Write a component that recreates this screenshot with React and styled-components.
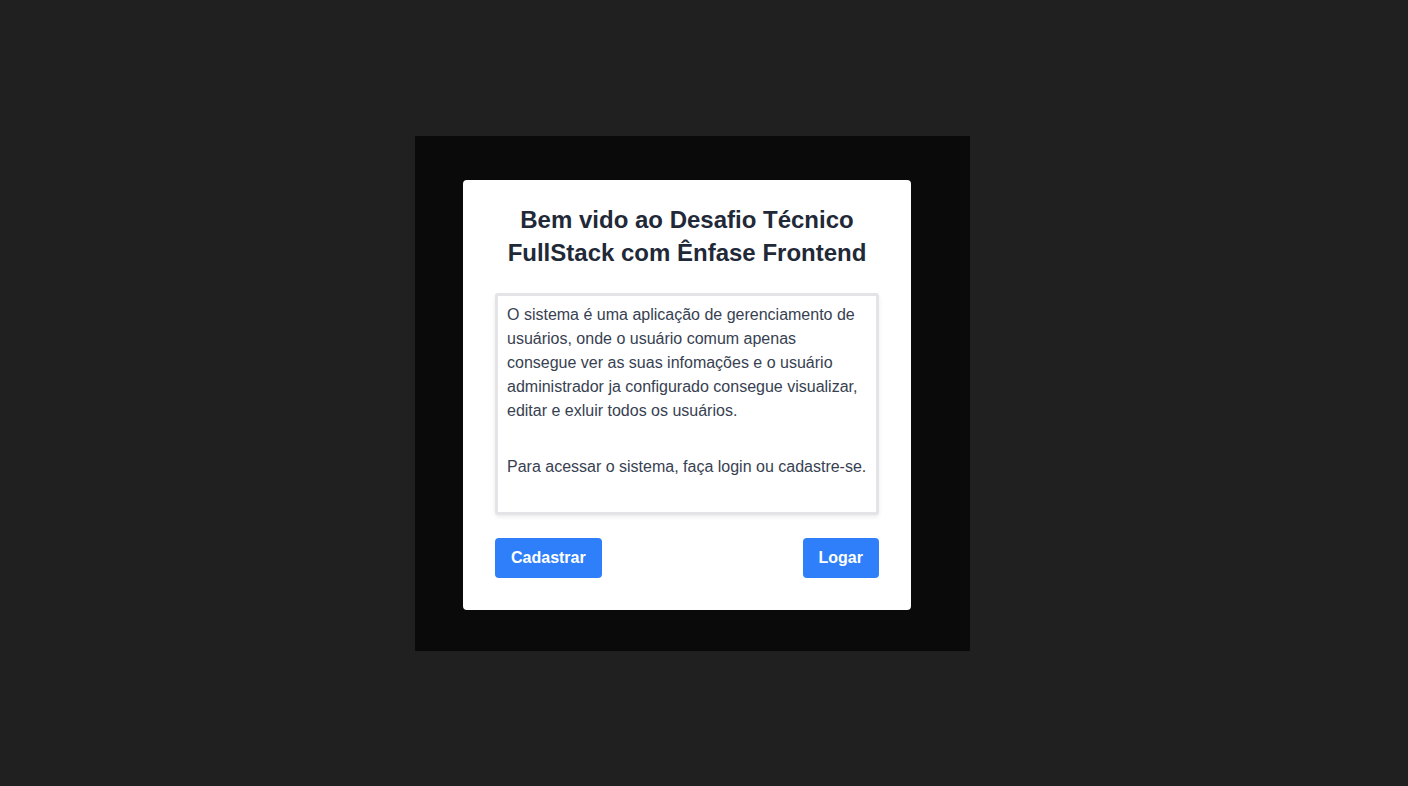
import React from 'react';
import styled, { createGlobalStyle } from 'styled-components';

const GlobalStyle = createGlobalStyle`
  html, body {
    margin: 0;
    padding: 0;
    background: #202020;
    font-family: "Liberation Sans", Arial, sans-serif;
  }
`;

const Page = styled.main`
  min-height: 786px;
  display: flex;
  align-items: center;
  justify-content: center;
`;

const Backdrop = styled.div`
  width: 555px;
  height: 515px;
  box-sizing: border-box;
  background: #0a0a0a;
  padding: 44px 59px 0 48px;
  margin-left: -23px;
`;

const Card = styled.section`
  background: #ffffff;
  border-radius: 4px;
  padding: 23px 32px 32px;
  display: flex;
  flex-direction: column;
`;

const Title = styled.h1`
  margin: 0 0 24px;
  font-size: 24px;
  line-height: 33px;
  font-weight: 700;
  text-align: center;
  color: #1f2937;
`;

const Description = styled.div`
  height: 222px;
  box-sizing: border-box;
  border: 3px solid #e3e3e8;
  border-radius: 3px;
  box-shadow: 0 2px 4px rgba(0, 0, 0, 0.08);
  padding: 7px 9px 6px;
  font-size: 16px;
  line-height: 24px;
  color: #374151;

  p {
    margin: 0 0 32px;
  }
`;

const Actions = styled.div`
  display: flex;
  justify-content: space-between;
  margin-top: 23px;
`;

const Button = styled.button`
  height: 40px;
  padding: 0 16px;
  border: none;
  border-radius: 4px;
  background: #2e7ff9;
  color: #ffffff;
  font-family: inherit;
  font-size: 16px;
  font-weight: 700;
  cursor: pointer;

  &:hover {
    background: #1f6de0;
  }
`;

export default function App() {
  return (
    <>
      <GlobalStyle />
      <Page>
        <Backdrop>
          <Card>
            <Title>
              Bem vido ao Desafio Técnico
              <br />
              FullStack com Ênfase Frontend
            </Title>
            <Description>
              <p>
                O sistema é uma aplicação de gerenciamento de usuários, onde o usuário comum apenas
                consegue ver as suas infomações e o usuário administrador ja configurado consegue
                visualizar, editar e exluir todos os usuários.
              </p>
              <p>Para acessar o sistema, faça login ou cadastre-se.</p>
            </Description>
            <Actions>
              <Button>Cadastrar</Button>
              <Button>Logar</Button>
            </Actions>
          </Card>
        </Backdrop>
      </Page>
    </>
  );
}
